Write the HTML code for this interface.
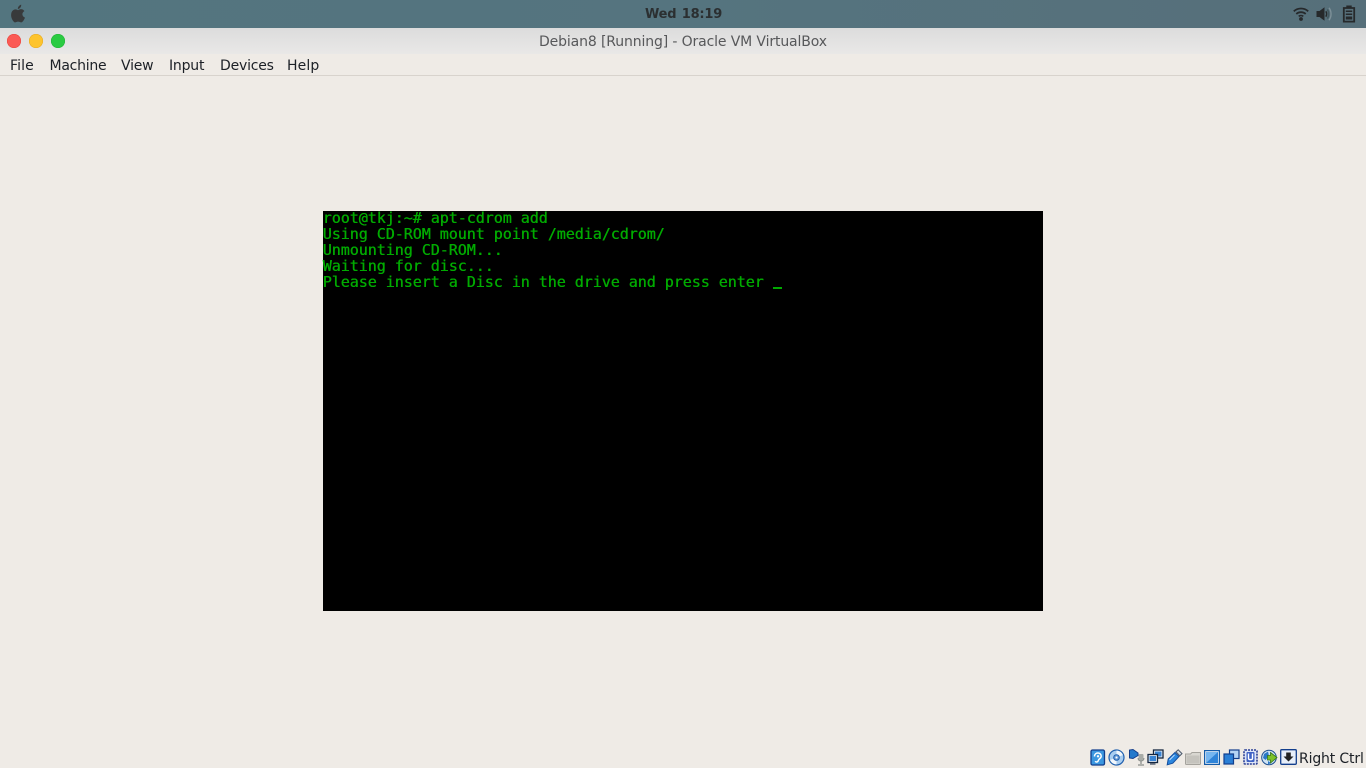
<!DOCTYPE html>
<html><head><meta charset="utf-8"><title>Debian8 [Running] - Oracle VM VirtualBox</title>
<style>
*{margin:0;padding:0;box-sizing:border-box}
html,body{width:1366px;height:768px;overflow:hidden;background:#efebe6;font-family:"Liberation Sans",sans-serif}
#top{position:absolute;left:0;top:0;width:1366px;height:28px;background:linear-gradient(90deg,#53757f 0,#55747f 50%,#566f7a 100%)}
#clock{position:absolute;left:645px;top:7px;font:bold 13px/16px "DejaVu Sans",sans-serif;color:#2b2f31;letter-spacing:-.2px;word-spacing:1px;white-space:nowrap}
#title{position:absolute;left:0;top:28px;width:1366px;height:26px;background:linear-gradient(#dcdcdc,#e9e8e7)}
#title span{position:absolute;left:539px;top:5px;font:14px/18px "DejaVu Sans",sans-serif;color:#57585a;white-space:nowrap;letter-spacing:-.13px}
.dot{position:absolute;top:6px;width:14px;height:14px;border-radius:50%}
#menu{position:absolute;left:0;top:54px;width:1366px;height:22px;background:#efebe6;border-bottom:1px solid #d8d3cd}
#menu span{position:absolute;top:4px;font:14px/17px "DejaVu Sans",sans-serif;color:#1c2026;white-space:nowrap;letter-spacing:-.2px}
#vm{position:absolute;left:323px;top:211px;width:720px;height:400px;background:#000}
#vm pre{position:absolute;left:-.4px;top:-1px;font:15px/16px "DejaVu Sans Mono",monospace;color:#00aa00;white-space:pre;letter-spacing:-.03px;text-shadow:.4px 0 0 #00aa00}
#cur{position:absolute;left:450px;top:76px;width:9px;height:2px;background:#00aa00}
svg{position:absolute;display:block}
#ctrl{position:absolute;left:1299px;top:750px;font:14px/18px "DejaVu Sans",sans-serif;color:#1c2026;white-space:nowrap;letter-spacing:-.15px}
</style></head><body>
<div id="top"></div>
<svg style="left:9px;top:4px" width="18" height="20" viewBox="0 0 18 20"><path fill="#383a3b" d="M9 6.200C10.200 5.300 12 4.700 13.400 5.400C14.500 5.900 15 6.500 15.400 7.100C13.800 8.100 13.300 9.200 13.400 10.500C13.500 12 14.600 13 16 13.600C15.400 15.200 14.600 16.600 13.500 17.800C12.500 18.800 11.500 18.300 10.500 17.900C9.500 17.500 8.500 17.500 7.500 18C6.500 18.500 5.700 18.700 4.800 17.800C3.200 16 1.700 12.900 2.200 9.900C2.600 7.100 4.500 5.300 6.500 5.400C7.500 5.400 8.300 5.900 9 6.200Z"/><path fill="#383a3b" d="M8.800 5C8.800 2.800 10.200 1.200 12.200 .6C12.400 2.800 11 4.700 8.800 5Z"/></svg>
<div id="clock">Wed 18:19</div>
<svg style="left:1293px;top:7px" width="16" height="14" viewBox="0 0 16 14"><path fill="none" stroke="#26292b" stroke-width="1.800" d="M.8 4.300C4.800 .6 11.200 .6 15.200 4.300"/><path fill="none" stroke="#26292b" stroke-width="1.800" d="M3.300 7C5.900 4.600 10.100 4.600 12.700 7"/><path fill="none" stroke="#26292b" stroke-width="1.600" d="M5.700 9.400C7 8.300 9 8.300 10.300 9.400"/><circle cx="8" cy="12" r="1.900" fill="#26292b"/></svg>
<svg style="left:1316px;top:7px" width="16" height="14" viewBox="0 0 16 14"><path fill="#26292b" d="M.5 4H3.500L8.500 .3V13.700L3.500 10H.5Z"/><path fill="none" stroke="#26292b" stroke-width="1.500" d="M9.800 4.300C10.900 5.800 10.900 8.200 9.800 9.700"/><path fill="none" stroke="#42565d" stroke-width="1.500" d="M11.300 2.500C13.200 5 13.200 9 11.300 11.500"/><path fill="none" stroke="#7d9098" stroke-width="1.400" d="M13 .8C15.700 4.300 15.700 9.700 13 13.200"/></svg>
<svg style="left:1342px;top:5px" width="14" height="18" viewBox="0 0 14 18"><path fill="none" stroke="#26292b" stroke-width="1.800" d="M1.800 3H12.200V16.600H1.800Z"/><path fill="#26292b" d="M4.300 .5H9.700V3H4.300ZM3.800 5.500H10.200V7H3.800ZM3.800 8.500H10.200V10H3.800ZM3.800 11.500H10.200V14.500H3.800Z"/></svg>
<div id="title"><i class="dot" style="left:7px;background:#fb5a55;box-shadow:inset 0 0 0 .5px #e5483f"></i><i class="dot" style="left:29px;background:#fdc42d;box-shadow:inset 0 0 0 .5px #e3a825"></i><i class="dot" style="left:51px;background:#2acb42;box-shadow:inset 0 0 0 .5px #25b23a"></i><span>Debian8 [Running] - Oracle VM VirtualBox</span></div>
<div id="menu"><span style="left:10px;letter-spacing:.1px">File</span><span style="left:49.500px;letter-spacing:-.25px">Machine</span><span style="left:121px">View</span><span style="left:169px">Input</span><span style="left:220px">Devices</span><span style="left:287px;letter-spacing:.1px">Help</span></div>
<div id="vm"><pre>root@tkj:~# apt-cdrom add
Using CD-ROM mount point /media/cdrom/
Unmounting CD-ROM...
Waiting for disc...
Please insert a Disc in the drive and press enter</pre><div id="cur"></div></div>
<svg style="left:1090px;top:749px" width="16" height="17" viewBox="0 0 16 17"><rect x="1" y="1" width="13.500" height="15" rx="1.500" fill="#3c97e0" stroke="#123e8c" stroke-width="1.300"/><path fill="none" stroke="#fff" stroke-width="1.500" d="M4.500 7.500C4.500 2.800 11.200 3 11.200 7.200C11.200 9.500 8.800 9.500 8.300 11.500C7.800 13.500 5.800 13.300 5.200 12.200"/><circle cx="8" cy="7.300" r="1.200" fill="#fff"/></svg>
<svg style="left:1108px;top:749px" width="17" height="17" viewBox="0 0 17 17"><circle cx="8.500" cy="8.500" r="7.500" fill="#a9cdf0" stroke="#1f5fae" stroke-width="1.200"/><path fill="#f2f7fc" d="M8.500 1.500A7 7 0 0 1 15 6L8.500 8.500ZM8.500 15.500A7 7 0 0 1 2 11L8.500 8.500Z"/><circle cx="8.500" cy="8.500" r="2.800" fill="#6f9fd8" stroke="#1f5fae"/><circle cx="8.500" cy="8.500" r="1" fill="#fff"/></svg>
<svg style="left:1128px;top:748px" width="17" height="18" viewBox="0 0 17 18"><path fill="#2379cc" stroke="#123e8c" d="M1.500 2V10L5 10.500L10 7.500V5L5 1.500Z"/><rect x="10.500" y="6" width="5" height="7" rx="1" fill="#a9aca8"/><path stroke="#9a9d99" stroke-width="1.500" d="M13 13V16M10 17H16" fill="none"/><path fill="none" stroke="#8d918d" d="M10 10C10 14 16 14 16 10"/></svg>
<svg style="left:1147px;top:749px" width="17" height="16" viewBox="0 0 17 16"><rect x="6.500" y="1" width="9.500" height="8" fill="#e9f1fa" stroke="#14253f" stroke-width="1.300"/><rect x="8" y="2.500" width="6.500" height="5" fill="#3a85d5"/><rect x="1" y="5.500" width="9.500" height="8" fill="#e9f1fa" stroke="#14253f" stroke-width="1.300"/><rect x="2.500" y="7" width="6.500" height="5" fill="#3a85d5"/><path stroke="#14253f" d="M3 15H8.500"/></svg>
<svg style="left:1166px;top:749px" width="17" height="17" viewBox="0 0 17 17"><path fill="#2c86de" stroke="#144f9e" d="M1.200 15.800L2.200 10L9 3.500L13 7.500L6.800 14.200Z"/><path fill="#d7dee6" stroke="#4a5668" d="M10 2.800L12.200 .8L16 4.600L13.800 6.800Z"/><path stroke="#bfe0ff" d="M3.500 11L8.500 6"/></svg>
<svg style="left:1185px;top:751px" width="16" height="14" viewBox="0 0 16 14"><path fill="#d9d7d1" stroke="#a5a39d" d="M.5 3V12.800C.5 13.200 1 13.500 1.500 13.500H14.500C15 13.500 15.500 13.200 15.500 12.800V1.500H7L5.500 3Z"/><path fill="#c5c3bd" d="M1.500 4.500H14.500V12.500H1.500Z"/></svg>
<svg style="left:1204px;top:750px" width="16" height="15" viewBox="0 0 16 15"><rect x=".6" y=".6" width="14.800" height="13.800" fill="#e5eef8" stroke="#155ca8" stroke-width="1.200"/><path fill="#2f84d8" d="M2 2H14V13H2Z"/><path fill="#76b6ef" d="M2 13L14 2H2Z"/></svg>
<svg style="left:1223px;top:749px" width="17" height="16" viewBox="0 0 17 16"><rect x="6.500" y="1" width="9.500" height="8.500" fill="#b4d4f4" stroke="#123e8c" stroke-width="1.200"/><rect x="1" y="5" width="9.500" height="10" fill="#2a7fd6" stroke="#123e8c" stroke-width="1.200"/></svg>
<svg style="left:1243px;top:749px" width="15" height="16" viewBox="0 0 15 16"><rect x="1" y="1" width="13" height="14" rx="1" fill="#dfe6f7" stroke="#2a3f95" stroke-width="1.600" stroke-dasharray="2 1"/><rect x="3.500" y="3" width="8" height="10" rx="1" fill="#3f62c4"/><path fill="none" stroke="#fff" stroke-width="1.400" d="M5.500 4.500V9.500C5.500 11 9.500 11 9.500 9.500V4.500"/></svg>
<svg style="left:1261px;top:749px" width="17" height="17" viewBox="0 0 17 17"><circle cx="8" cy="8.500" r="7.300" fill="#cfe3f6" stroke="#1c4f8f"/><path fill="#2a78c8" d="M3 5L7 2.500L8 7L4.500 11L2 9ZM7 12L10 14L7 15.500Z"/><path fill="#7cc22a" stroke="#35751a" stroke-width=".8" d="M9.500 3.500L16 8.500L9.500 14V11H6.500V6.500H9.500Z"/></svg>
<svg style="left:1280px;top:749px" width="17" height="16" viewBox="0 0 17 16"><rect x=".7" y=".7" width="15.600" height="14.600" rx="1" fill="#e8eff9" stroke="#123e8c" stroke-width="1.300"/><path fill="#222" d="M6.200 3.500H10.800V7.500H13.500L8.500 12.500L3.500 7.500H6.200Z"/></svg>
<div id="ctrl">Right Ctrl</div>
</body></html>
